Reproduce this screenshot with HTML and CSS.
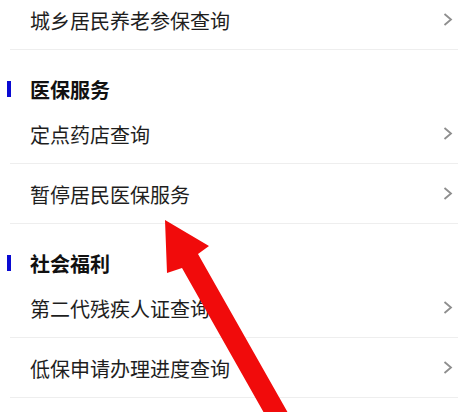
FILE: index.html
```html
<!DOCTYPE html>
<html lang="zh-CN">

<head>
    <meta charset="UTF-8">
    <meta name="viewport" content="width=device-width, initial-scale=1.0">
    <title>服务列表</title>
    <link rel="stylesheet" href="styles.css">
</head>

<body>
    <div class="screen">
        <div class="list">
            <a class="item" href="#">
                <span class="label">城乡居民养老参保查询</span>
                <svg class="chevron" viewBox="0 0 10 14"><polyline points="1.5,1.5 8,7 1.5,12.5"/></svg>
            </a>

            <div class="section">
                <span class="bar"></span>
                <span class="title">医保服务</span>
            </div>
            <a class="item" href="#">
                <span class="label">定点药店查询</span>
                <svg class="chevron" viewBox="0 0 10 14"><polyline points="1.5,1.5 8,7 1.5,12.5"/></svg>
            </a>
            <a class="item" href="#">
                <span class="label">暂停居民医保服务</span>
                <svg class="chevron" viewBox="0 0 10 14"><polyline points="1.5,1.5 8,7 1.5,12.5"/></svg>
            </a>

            <div class="section">
                <span class="bar"></span>
                <span class="title">社会福利</span>
            </div>
            <a class="item" href="#">
                <span class="label">第二代残疾人证查询</span>
                <svg class="chevron" viewBox="0 0 10 14"><polyline points="1.5,1.5 8,7 1.5,12.5"/></svg>
            </a>
            <a class="item" href="#">
                <span class="label">低保申请办理进度查询</span>
                <svg class="chevron" viewBox="0 0 10 14"><polyline points="1.5,1.5 8,7 1.5,12.5"/></svg>
            </a>
        </div>

        <!-- red pointer drawn over the list -->
        <svg class="pointer" viewBox="0 0 470 412">
            <polygon points="165,220 209,246 198,254 292,420 268,420 182,268 167,273"/>
        </svg>
    </div>
</body>

</html>
```

FILE: styles.css
```css
body {
    margin: 0;
    background-color: #ffffff;
    font-family: "Noto Sans CJK SC", "Noto Sans", sans-serif;
}

.screen {
    position: relative;
    height: 412px;
    overflow: hidden;
}

.list {
    margin-top: -10px;
}

.item {
    display: flex;
    align-items: center;
    justify-content: space-between;
    height: 59px;
    margin: 0 12px 0 10px;
    padding: 0 5px 0 20px;
    border-bottom: 1px solid #eeeeee;
    text-decoration: none;
    color: #1e1e1e;
}

.label {
    font-size: 20px;
    line-height: 24px;
    padding-top: 2px;
}

.chevron {
    width: 10px;
    height: 15px;
    fill: none;
    stroke: #8e8e8e;
    stroke-width: 1.8;
}

.section {
    display: flex;
    align-items: center;
    height: 24px;
    padding: 27px 0 3px 7px;
}

.bar {
    width: 4px;
    height: 16px;
    background-color: #0a0ad2;
}

.title {
    margin-left: 19px;
    font-size: 20px;
    font-weight: bold;
    color: #111111;
}

.pointer {
    position: absolute;
    top: 0;
    left: 0;
    width: 470px;
    height: 412px;
    fill: #f10b0b;
}
```
